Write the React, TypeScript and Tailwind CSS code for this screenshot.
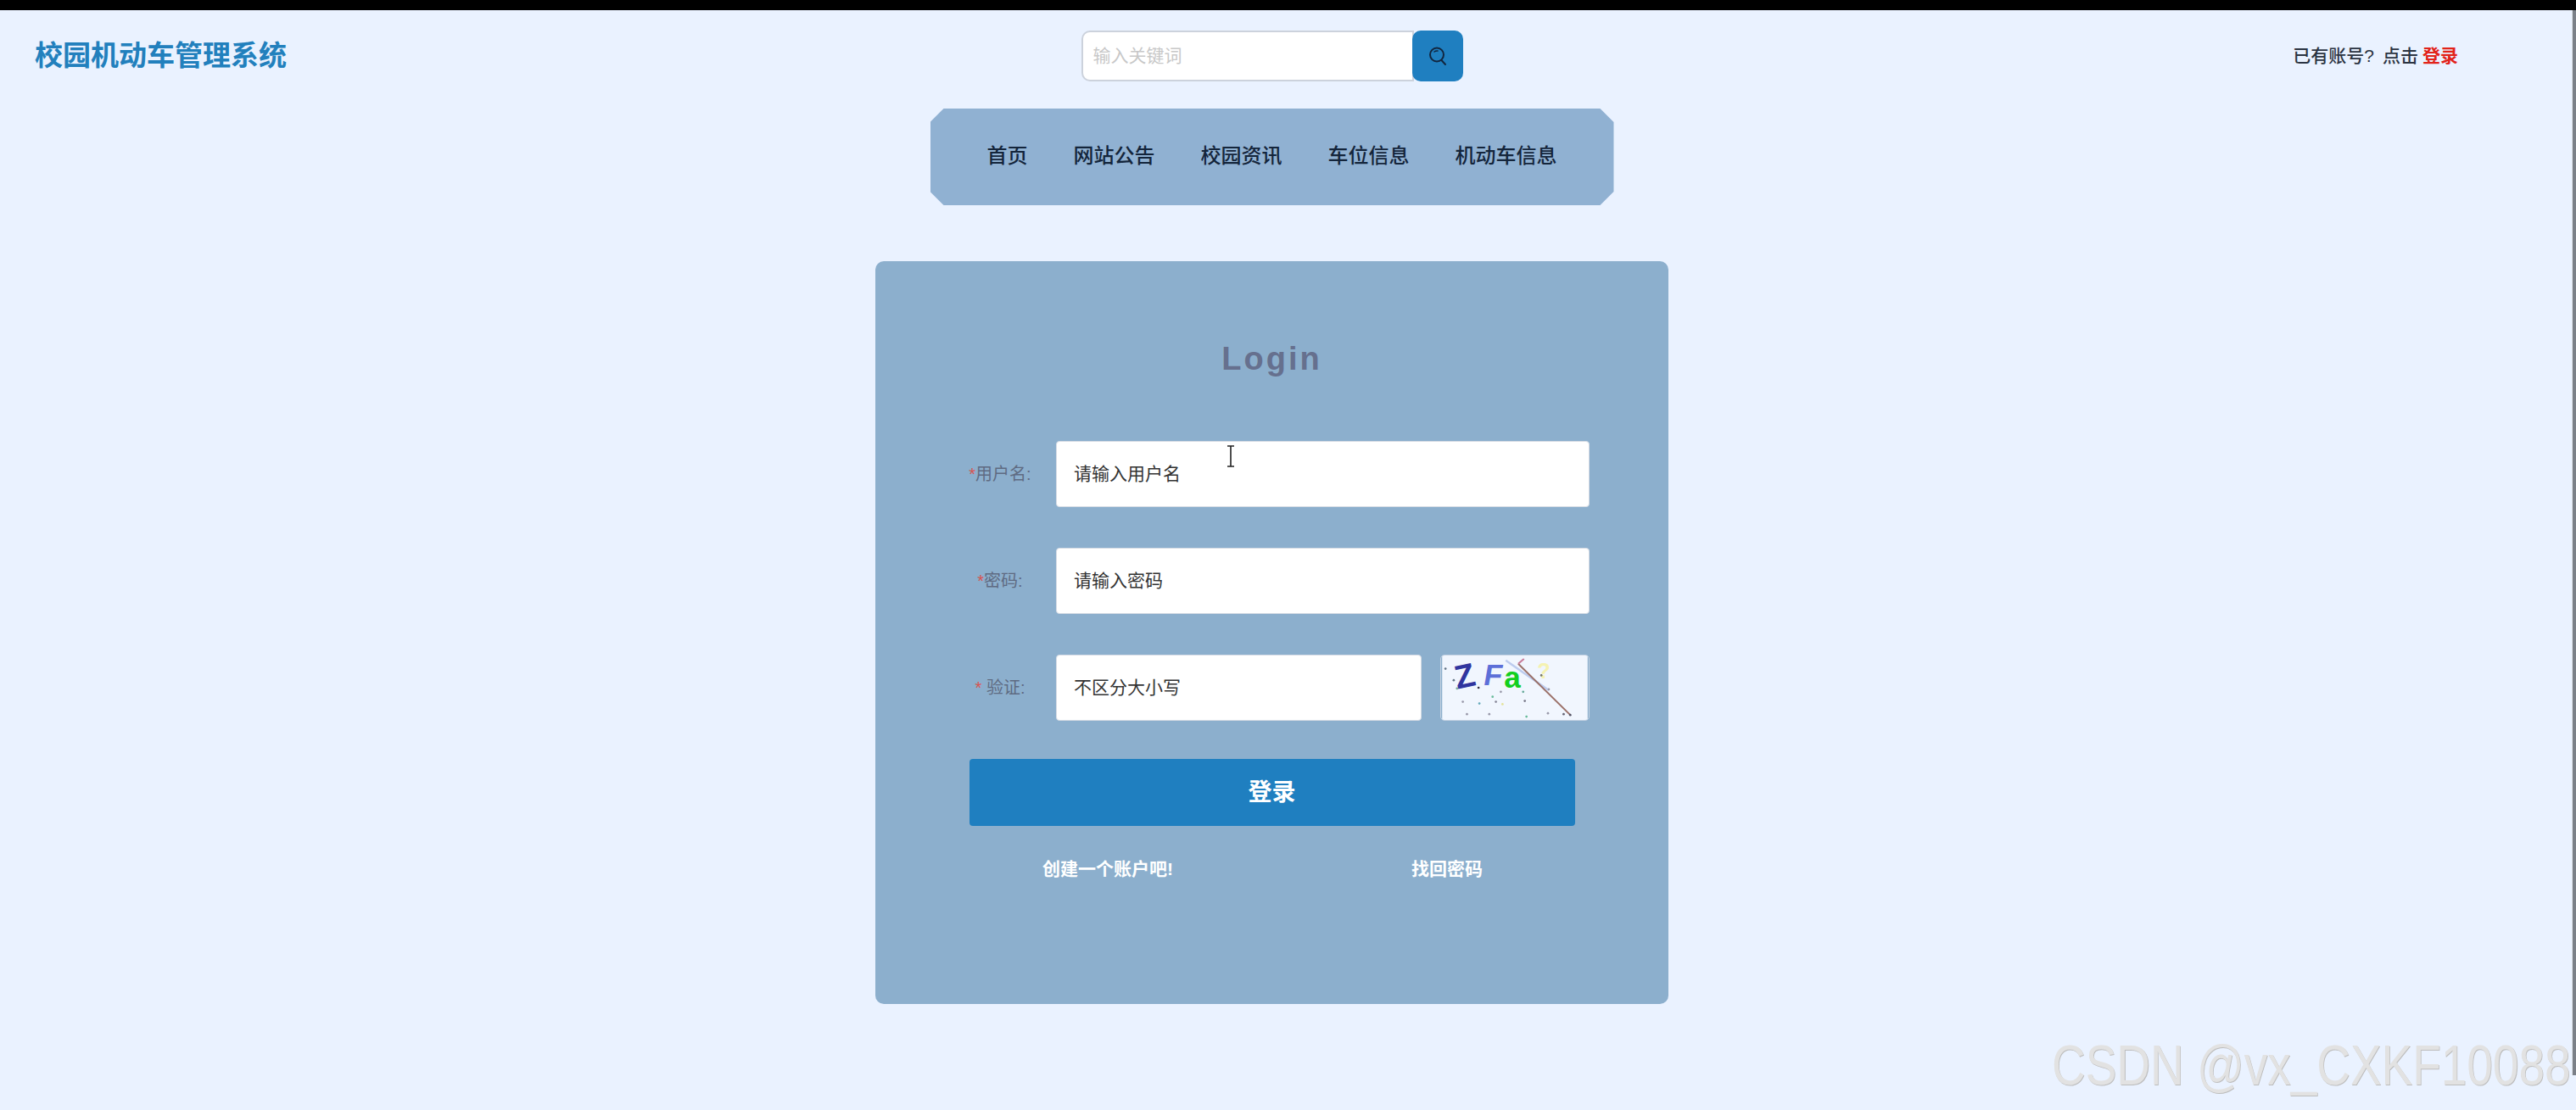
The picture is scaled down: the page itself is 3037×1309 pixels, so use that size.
import type { ReactNode } from "react";

const sans = "font-['Liberation_Sans','Noto_Sans_CJK_SC',sans-serif]";

const dots: [number, number, string][] = [
  [4, 16, "#667788"], [14, 30, "#667788"], [18, 40, "#77aa99"], [44, 39, "#333344"], [61, 50, "#66bb99"],
  [25, 56, "#9999aa"], [45, 58, "#66aabb"], [65, 56, "#888899"], [73, 59, "#e4e39c"], [71, 44, "#9999aa"],
  [98, 44, "#66aa99"], [100, 55, "#777788"], [30, 71, "#9999aa"], [57, 71, "#9999aa"], [102, 74, "#66bb99"],
  [128, 70, "#9999aa"], [147, 71, "#666677"], [155, 72, "#555566"], [129, 41, "#9999aa"], [120, 24, "#777766"],
];

function Captcha() {
  return (
    <div className="w-[176px] h-[78px] shrink-0 rounded-[5px] overflow-hidden border border-[#c4d2e2]">
      <svg viewBox="0 0 176 78" className="w-full h-full block">
        <rect width="176" height="78" fill="#f1f6fe" />
        <g fontFamily="'Liberation Sans',sans-serif" fontWeight="700">
          <text x="115" y="28" fontSize="26" fill="#f5f2b2">?</text>
          <text x="15" y="38" fontSize="40" fill="#30359f" transform="rotate(-12 30 24)">Z</text>
          <text x="49" y="36" fontSize="36" fill="#5d6fd8" transform="skewX(-10) translate(6 0)">F</text>
          <text x="75" y="39" fontSize="36" fill="#12cf20">a</text>
        </g>
        <path d="M77 6 L129 42" stroke="#bccbee" strokeWidth="2.5" fill="none" />
        <path d="M92 10 L155 72" stroke="#9a6f67" strokeWidth="2" fill="none" />
        <path d="M92 10 L99 4" stroke="#c77a98" strokeWidth="2" fill="none" />
        {dots.map(([x, y, c], i) => (
          <circle key={i} cx={x} cy={y} r="1.4" fill={c} />
        ))}
      </svg>
    </div>
  );
}

function Field({ star, label, value, cursor, children }: { star: string; label: string; value: string; cursor?: boolean; children?: ReactNode }) {
  return (
    <div className="flex items-center">
      <div className="w-[132px] text-center text-[20px] text-[#5f6b82] whitespace-nowrap">
        <span className="text-[#d9534f]">{star}</span>
        {label}
      </div>
      <div className="flex gap-[22px] w-[629px]">
        <div className="relative flex-1 h-[78px] bg-white rounded-[4px] border border-[#d5dbe4] flex items-center pl-[20px] text-[21px] text-[#333333]">
          {value}
          {cursor && (
            <svg className="absolute left-[199px] top-[4px]" width="12" height="26" viewBox="0 0 12 26" fill="none" stroke="#222222" strokeWidth="1.6">
              <path d="M2 1 H10 M6 1 V25 M2 25 H10" />
            </svg>
          )}
        </div>
        {children}
      </div>
    </div>
  );
}

export default function App() {
  return (
    <div className={`${sans} relative h-[1309px] overflow-hidden bg-[#eaf2ff]`}>
      <div className="h-[12px] bg-black" />
      <div className="flex">
        <div className="w-[2999px] shrink-0">
          <header className="grid grid-cols-[1fr_450px_1fr] h-[116px] px-[101px] pt-[24px]">
            <div className="text-[33px] leading-[60px] font-bold text-[#2280bd] -ml-[60px]">校园机动车管理系统</div>
            <div className="flex h-[60px]">
              <div className="flex-1 bg-white border-2 border-[#ccd2dc] rounded-l-[10px] flex items-center pl-[12px] text-[21px] text-[#c8c8c8]">
                输入关键词
              </div>
              <div className="w-[60px] -ml-[2px] bg-[#1f7fc0] rounded-[10px] flex items-center justify-center">
                <svg width="24" height="26" viewBox="0 0 24 26" fill="none" stroke="#12263f" strokeWidth="2" strokeLinecap="round">
                  <circle cx="11" cy="11.5" r="8" />
                  <path d="M16.5 18 L21 23" />
                  <path d="M8 8 A 5 5 0 0 1 12 7" strokeWidth="1.5" />
                </svg>
              </div>
            </div>
            <div className="flex justify-end gap-[10px] text-[21px] leading-[60px] text-[#2b3442] font-medium whitespace-nowrap">
              <span>已有账号?</span>
              <span className="flex gap-[5px]">
                <span>点击</span>
                <span className="text-[#e2231a] font-bold">登录</span>
              </span>
            </div>
          </header>

          <nav
            className="mx-auto w-[806px] h-[114px] pb-[3px] bg-[#90b1d2] flex items-center justify-center gap-[54px] text-[24px] font-medium text-[#14253b]"
            style={{ clipPath: "polygon(16px 0, calc(100% - 16px) 0, 100% 16px, 100% calc(100% - 16px), calc(100% - 16px) 100%, 16px 100%, 0 calc(100% - 16px), 0 16px)" }}
          >
            <span>首页</span>
            <span>网站公告</span>
            <span>校园资讯</span>
            <span>车位信息</span>
            <span>机动车信息</span>
          </nav>

          <main className="mx-auto mt-[66px] w-[935px] h-[876px] bg-[#8cafcd] rounded-[10px] pt-[92px]">
            <h1 className="text-center text-[38px] leading-[46px] font-bold tracking-[3px] text-[#66708e]">Login</h1>
            <div className="mt-[74px] pl-[81px] flex flex-col gap-[48px]">
              <Field star="*" label="用户名:" value="请输入用户名" cursor />
              <Field star="*" label="密码:" value="请输入密码" />
              <Field star="* " label="验证:" value="不区分大小写">
                <Captcha />
              </Field>
            </div>
            <button className="block mx-auto mt-[45px] w-[714px] h-[79px] bg-[#1f7fc0] rounded-[4px] text-white text-[28px] font-bold">
              登录
            </button>
            <div className="ml-[74px] mt-[37px] w-[800px] grid grid-cols-2 text-center text-[21px] leading-[28px] font-bold text-white">
              <span>创建一个账户吧!</span>
              <span>找回密码</span>
            </div>
          </main>
        </div>
        <div className="ml-auto w-[5px] h-[1256px] bg-[#7b8088] border-l border-[#dfe3ea]" />
      </div>
      <div className="absolute left-[2419px] top-[1216px] origin-left scale-x-[0.82] whitespace-nowrap text-[67px] leading-[80px] text-[#e2e2e2] [text-shadow:1px_1px_0_#bdbdbd]">
        CSDN @vx_CXKF10088
      </div>
    </div>
  );
}
